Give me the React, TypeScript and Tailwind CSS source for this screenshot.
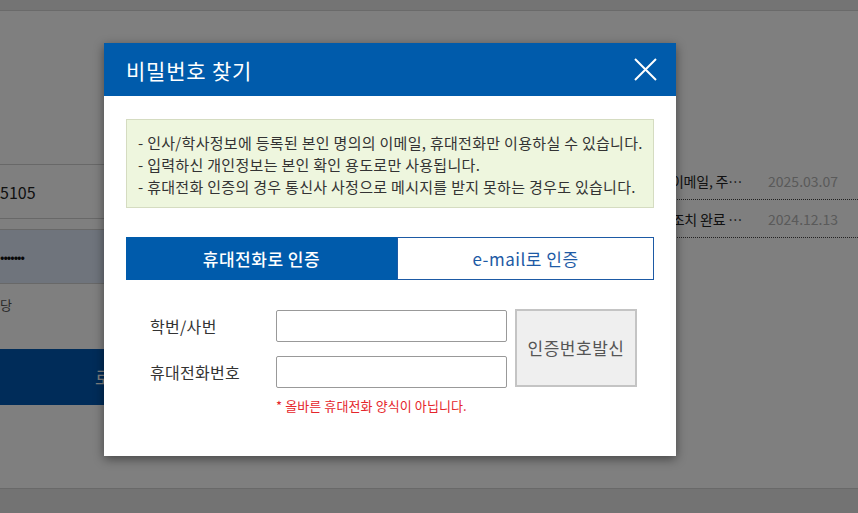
import React from "react";

const font = { fontFamily: '"Noto Sans CJK KR", "Noto Sans", sans-serif' };

export default function App() {
  return (
    <div className="relative w-[858px] h-[513px] overflow-hidden bg-white" style={font}>
      {/* Underlying page */}
      <div className="flex h-full flex-col">
        <div className="h-[11px] border-b border-[#d4d4d4] bg-[#e8e8e8]" />
        <div className="flex flex-1">
          {/* left login panel */}
          <div className="w-[420px] pt-[153px]">
            <div className="flex h-[55px] items-center border-y border-[#d0d0d0] text-[16px] text-[#222]">5105</div>
            <div className="mt-[10px] flex h-[55px] items-center border-y border-[#d0d0d0] bg-[#dfe9f8] text-[13px] tracking-[-1px] text-[#111]">•••••••</div>
            <div className="mt-[10px] flex h-[22px] items-center text-[13px] text-[#555]">당</div>
            <div className="mt-[33px] flex h-[56px] items-center bg-[#0059b3] pl-[95px] text-[18px] text-white">로그인</div>
          </div>
          {/* right notice list */}
          <div className="flex flex-1 flex-col pt-[152px]">
            <div className="flex h-[37px] items-center border-b border-dotted border-[#444] pr-[20px] text-[14px]">
              <div className="flex flex-1 justify-end overflow-hidden whitespace-nowrap pr-[26px] text-[#222]">
                <span className="tracking-[-0.2px]">[안내] 비밀번호 찾기 인증수단 변경 이메일, 주…</span>
              </div>
              <span className="text-[#b4b4b4]">2025.03.07</span>
            </div>
            <div className="flex h-[38px] items-center border-b border-dotted border-[#444] pr-[20px] pt-[2px] text-[14px]">
              <div className="flex flex-1 justify-end overflow-hidden whitespace-nowrap pr-[26px] text-[#222]">
                <span className="tracking-[-0.2px]">[공지] 시스템 보안 취약점 조치 완료 …</span>
              </div>
              <span className="text-[#b4b4b4]">2024.12.13</span>
            </div>
          </div>
        </div>
        <div className="h-[25px] border-t border-[#d2d2d2] bg-[#e6e6e6]" />
      </div>

      {/* Dim overlay */}
      <div className="absolute inset-0 bg-black/50" />

      {/* Modal */}
      <div className="absolute left-[104px] top-[43px] h-[413px] w-[572px] bg-white shadow-[0_3px_10px_rgba(0,0,0,0.45)]">
        <div className="flex h-[53px] items-center justify-between bg-[#005bab] pl-[22px] pr-[19px]">
          <h2 className="text-[21px] leading-[28px] tracking-[0.8px] text-white">비밀번호 찾기</h2>
          <svg width="23" height="23" viewBox="0 0 23 23" fill="none">
            <path d="M1 1L22 22M22 1L1 22" stroke="white" strokeWidth="2" />
          </svg>
        </div>
        <div className="px-[22px] pt-[23px]">
          <div className="border border-[#d5dcc1] bg-[#eef6de] pb-[9px] pl-[11px] pt-[12px] text-[15px] leading-[22px] tracking-[0.3px] text-[#333]">
            <p>- 인사/학사정보에 등록된 본인 명의의 이메일, 휴대전화만 이용하실 수 있습니다.</p>
            <p>- 입력하신 개인정보는 본인 확인 용도로만 사용됩니다.</p>
            <p>- 휴대전화 인증의 경우 통신사 사정으로 메시지를 받지 못하는 경우도 있습니다.</p>
          </div>
          <div className="mt-[29px] flex h-[43px]">
            <button className="w-[271px] bg-[#005bab] text-[17px] font-medium tracking-[0.5px] text-white">휴대전화로 인증</button>
            <button className="flex-1 border border-[#1d5aa5] bg-white text-[17px] tracking-[0.5px] text-[#1d5aa5]">e-mail로 인증</button>
          </div>
          <div className="mt-[30px] flex pl-[24px]">
            <div className="flex flex-col gap-[14px]">
              <div className="flex items-center">
                <label className="w-[126px] text-[16px] tracking-[0.3px] text-[#333]">학번/사번</label>
                <input className="h-[32px] w-[231px] rounded-[2px] border border-[#999] bg-white outline-none" />
              </div>
              <div className="flex items-center">
                <label className="w-[126px] text-[16px] tracking-[0.3px] text-[#333]">휴대전화번호</label>
                <input className="h-[32px] w-[231px] rounded-[2px] border border-[#999] bg-white outline-none" />
              </div>
            </div>
            <button className="ml-[8px] mt-[-1px] h-[78px] w-[122px] border-2 border-[#c4c4c4] bg-[#efefef] text-[17px] tracking-[0.5px] text-[#555]">
              인증번호발신
            </button>
          </div>
          <p className="ml-[150px] mt-[9px] text-[13px] leading-[18px] tracking-[0.1px] text-[#e5252b]">* 올바른 휴대전화 양식이 아닙니다.</p>
        </div>
      </div>
    </div>
  );
}
